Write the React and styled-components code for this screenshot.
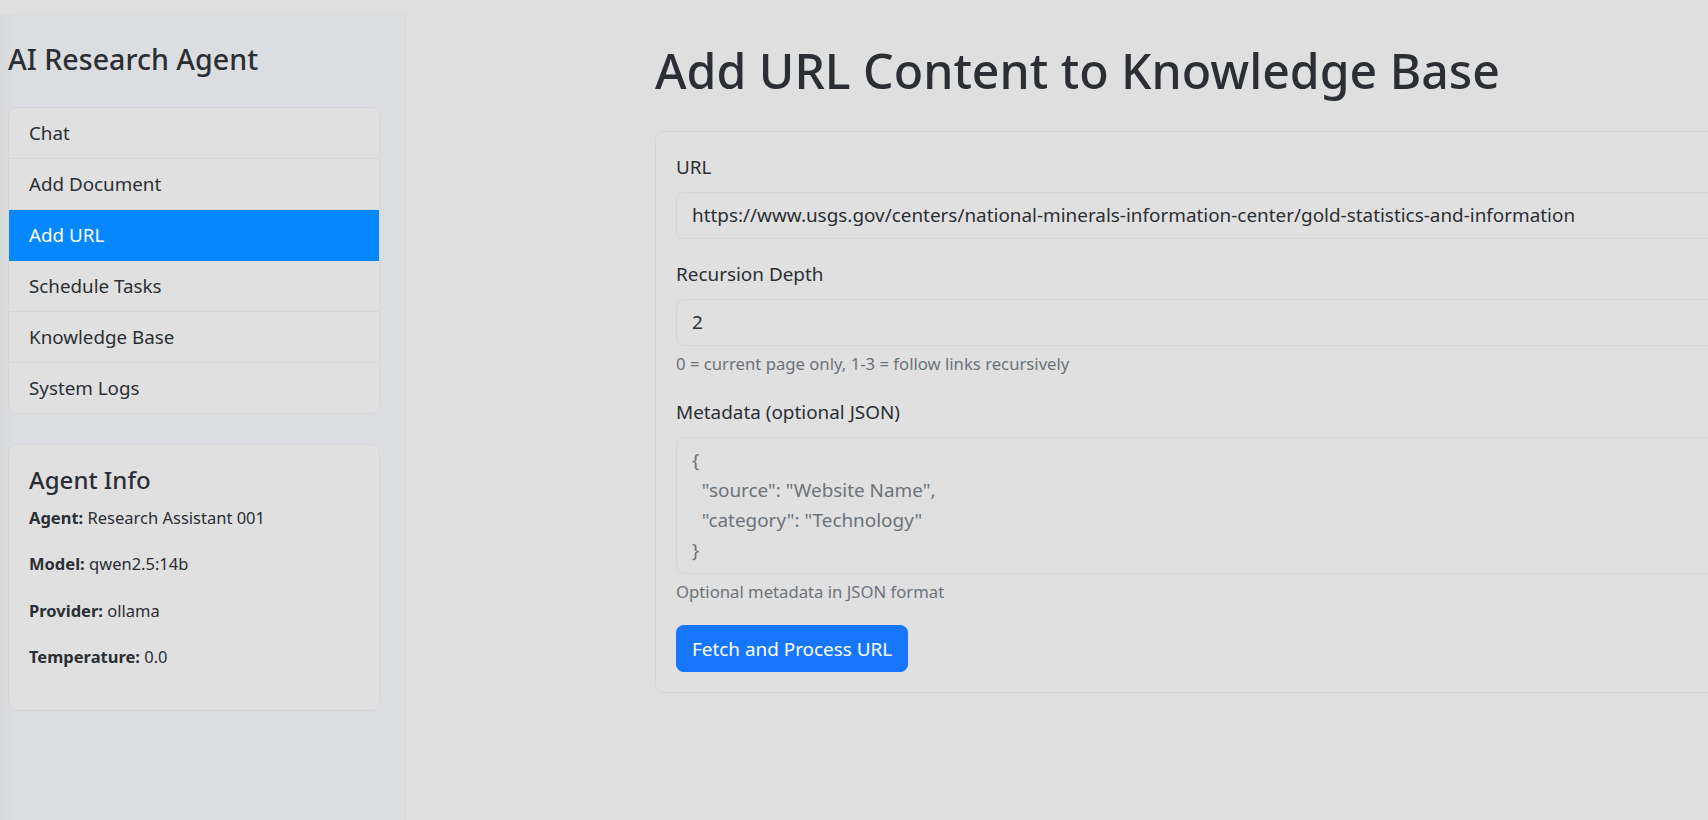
import React from 'react';
import styled, { createGlobalStyle } from 'styled-components';

const GlobalStyle = createGlobalStyle`
  html, body {
    margin: 0;
    padding: 0;
    background: #dfdfdf;
    overflow: hidden;
  }
  body {
    font-family: "Noto Sans", "Open Sans", sans-serif;
    color: #2b2f34;
  }
  *, *::before, *::after {
    box-sizing: border-box;
  }
`;

const Layout = styled.div`
  display: flex;
  width: 1708px;
  height: 820px;
`;

const Sidebar = styled.aside`
  flex: 0 0 406px;
  margin-top: 14px;
  padding: 0 25px 0 8px;
  background: linear-gradient(90deg, #d8d9db 0px, #dcdde0 16px, #dcdde0 100%);
  border-right: 1px solid #d5d6d8;
`;

const Brand = styled.h3`
  margin: 24px 0 27px;
  font-size: 28.6px;
  font-weight: 500;
  line-height: 42px;
  color: #2b2f34;
`;

const NavList = styled.div`
  display: flex;
  flex-direction: column;
  border: 1px solid #d6d6d8;
  border-radius: 8px;
  overflow: hidden;
  background: #e0e0e0;
`;

const NavItem = styled.div`
  padding: 10px 20px;
  font-size: 18.8px;
  line-height: 30px;
  color: ${(p) => (p.$active ? '#ffffff' : '#2b2f34')};
  background: ${(p) => (p.$active ? '#0587fe' : 'transparent')};
  border-bottom: 1px solid ${(p) => (p.$active ? '#0587fe' : '#d6d6d8')};

  &:last-child {
    border-bottom: none;
  }
`;

const InfoCard = styled.div`
  margin-top: 30px;
  padding: 20px;
  background: #e0e0e0;
  border: 1px solid #d6d6d8;
  border-radius: 9px;
`;

const InfoTitle = styled.h5`
  margin: 0 0 10px;
  font-size: 24px;
  font-weight: 500;
  line-height: 30px;
`;

const InfoLine = styled.p`
  margin: 0 0 20px;
  font-size: 16.5px;
  line-height: 26.25px;

  strong {
    font-weight: 700;
  }
`;

const Main = styled.main`
  flex: 1;
  min-width: 0;
  padding-left: 249px;
  overflow: hidden;
`;

const PageTitle = styled.h1`
  margin: 39px 0 28px;
  font-size: 48.2px;
  font-weight: 500;
  line-height: 63.6px;
  white-space: nowrap;
  color: #2b2f34;
`;

const Card = styled.div`
  width: 1300px;
  padding: 20px;
  border: 1px solid #d4d4d6;
  border-radius: 9px;
  background: #e0e0e0;
`;

const Group = styled.div`
  margin-bottom: 20px;
`;

const Label = styled.label`
  display: block;
  margin-bottom: 10px;
  font-size: 18.9px;
  line-height: 30px;
`;

const fieldCss = `
  display: block;
  width: 100%;
  padding: 7.5px 15px;
  font-family: inherit;
  font-size: 18.9px;
  line-height: 30px;
  color: #2b2f34;
  background: #e0e0e0;
  border: 1px solid #d5d6d8;
  border-radius: 7.5px;
  outline: none;

  &::placeholder {
    color: #6d7379;
    opacity: 1;
  }
`;

const Input = styled.input`
  ${fieldCss}
`;

const TextArea = styled.textarea`
  ${fieldCss}
  resize: none;
`;

const Help = styled.div`
  margin-top: 5px;
  font-size: 16.7px;
  line-height: 26.25px;
  color: #6d7379;
`;

const PrimaryButton = styled.button`
  padding: 7.5px 15px;
  font-family: inherit;
  font-size: 18.9px;
  line-height: 30px;
  color: #ffffff;
  background: #1677fe;
  border: 1px solid #1677fe;
  border-radius: 7.5px;
  cursor: pointer;
`;

const navItems = ['Chat', 'Add Document', 'Add URL', 'Schedule Tasks', 'Knowledge Base', 'System Logs'];

const agentInfo = [
  ['Agent:', 'Research Assistant 001'],
  ['Model:', 'qwen2.5:14b'],
  ['Provider:', 'ollama'],
  ['Temperature:', '0.0'],
];

const metadataPlaceholder = '{\n  "source": "Website Name",\n  "category": "Technology"\n}';

export default function App() {
  return (
    <>
      <GlobalStyle />
      <Layout>
        <Sidebar>
          <Brand>AI Research Agent</Brand>
          <NavList>
            {navItems.map((item) => (
              <NavItem key={item} $active={item === 'Add URL'}>
                {item}
              </NavItem>
            ))}
          </NavList>
          <InfoCard>
            <InfoTitle>Agent Info</InfoTitle>
            {agentInfo.map(([k, v]) => (
              <InfoLine key={k}>
                <strong>{k}</strong> {v}
              </InfoLine>
            ))}
          </InfoCard>
        </Sidebar>

        <Main>
          <PageTitle>Add URL Content to Knowledge Base</PageTitle>
          <Card>
            <Group>
              <Label>URL</Label>
              <Input
                type="text"
                defaultValue="https://www.usgs.gov/centers/national-minerals-information-center/gold-statistics-and-information"
              />
            </Group>
            <Group>
              <Label>Recursion Depth</Label>
              <Input type="text" defaultValue="2" />
              <Help>0 = current page only, 1-3 = follow links recursively</Help>
            </Group>
            <Group>
              <Label>Metadata (optional JSON)</Label>
              <TextArea rows={4} placeholder={metadataPlaceholder} />
              <Help>Optional metadata in JSON format</Help>
            </Group>
            <PrimaryButton type="button">Fetch and Process URL</PrimaryButton>
          </Card>
        </Main>
      </Layout>
    </>
  );
}
